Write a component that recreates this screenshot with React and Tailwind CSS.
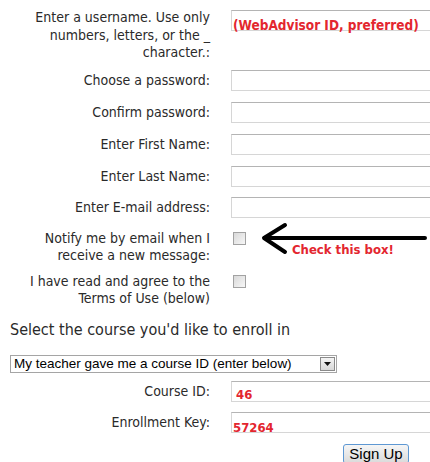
import React from "react";

const labelFont = { fontFamily: '"DejaVu Sans Condensed", "DejaVu Sans", Tahoma, sans-serif' };

function TextBox({ children, className = "" }) {
  return (
    <div
      className={`relative h-[21px] w-[230px] border border-[#d6d6d6] border-t-[#b4b4b4] bg-white ${className}`}
    >
      {children}
    </div>
  );
}

function CheckBox() {
  return (
    <div className="h-[13px] w-[13px] border border-[#a2a2a2] bg-gradient-to-br from-[#d9d9d9] to-[#f7f7f7]" />
  );
}

function Row({ label, children, className = "", align = "items-center" }) {
  return (
    <div className={`flex ${align} ${className}`}>
      <div className="w-[210px] shrink-0 text-right leading-[17.5px]">{label}</div>
      <div className="ml-[21px]">{children}</div>
    </div>
  );
}

export default function App() {
  return (
    <div
      className="relative h-[462px] w-[430px] overflow-hidden bg-white pt-[9px] text-[14px] text-[#2a2a2a]"
      style={labelFont}
    >
      <Row align="items-start" label={<>Enter a username. Use only<br />numbers, letters, or the _<br />character.:</>}>
        <TextBox className="mt-[1px] h-[20px]">
          <span className="absolute left-[1px] top-[6px] whitespace-nowrap text-[13.5px] font-bold leading-[17px] text-[#e3262f]">
            (WebAdvisor ID, preferred)
          </span>
        </TextBox>
      </Row>

      <Row className="mt-[8.5px]" label="Choose a password:">
        <TextBox />
      </Row>
      <Row className="mt-[11px]" label="Confirm password:">
        <TextBox />
      </Row>
      <Row className="mt-[11px]" label="Enter First Name:">
        <TextBox />
      </Row>
      <Row className="mt-[11px]" label="Enter Last Name:">
        <TextBox />
      </Row>
      <Row className="mt-[10px]" label="Enter E-mail address:">
        <TextBox />
      </Row>

      <Row align="items-start" className="mt-[11.5px]" label={<>Notify me by email when I<br />receive a new message:</>}>
        <div className="ml-[2px] mt-[2.5px]">
          <CheckBox />
        </div>
      </Row>
      <Row align="items-start" className="mt-[8px]" label={<>I have read and agree to the<br />Terms of Use (below)</>}>
        <div className="ml-[2px] mt-[2.5px]">
          <CheckBox />
        </div>
      </Row>

      <div className="ml-[10px] mt-[13px] whitespace-nowrap text-[16px] leading-[17.5px]">
        Select the course you'd like to enroll in
      </div>

      <div
        className="ml-[10px] mt-[17px] flex h-[18px] w-[327px] items-center border border-[#a5a5a5] bg-white pl-[3px] text-[13.5px] text-black"
        style={{ fontFamily: '"Liberation Sans", Arial, sans-serif' }}
      >
        <span className="flex-1 whitespace-nowrap leading-[16px]">My teacher gave me a course ID (enter below)</span>
        <div className="mr-[1px] flex h-[14px] w-[15px] items-center justify-center border border-[#8a8a8a] bg-gradient-to-b from-[#f4f4f4] to-[#d8d8d8]">
          <svg width="7" height="4" viewBox="0 0 7 4">
            <path d="M0 0h7L3.5 4z" fill="#111" />
          </svg>
        </div>
      </div>

      <Row className="mt-[8px]" label="Course ID:">
        <TextBox>
          <span className="absolute left-[4px] top-[4px] font-bold text-[13px] leading-[17px] text-[#e3262f]">46</span>
        </TextBox>
      </Row>
      <Row className="mt-[10px]" label="Enrollment Key:">
        <TextBox>
          <span className="absolute left-[1px] top-[6px] font-bold text-[13px] leading-[17px] text-[#e3262f]">57264</span>
        </TextBox>
      </Row>

      <div className="mt-[11px] flex">
        <button
          className="ml-[343px] h-[20px] w-[66px] rounded-[3px] border border-[#5e98d3] bg-gradient-to-b from-[#f6f6f6] to-[#dadada] text-[15px] leading-[16px] text-black"
          style={{ fontFamily: '"Liberation Sans", Arial, sans-serif' }}
        >
          Sign Up
        </button>
      </div>

      {/* arrow pointing at the notify checkbox */}
      <svg className="absolute left-0 top-0" width="430" height="462" viewBox="0 0 430 462">
        <path
          d="M264 238 L425 238 M285 225 L264 238 L285 252"
          fill="none"
          stroke="#000"
          strokeWidth="4"
          strokeLinecap="round"
          strokeLinejoin="round"
        />
      </svg>
      <span className="absolute left-[292px] top-[241px] whitespace-nowrap text-[13px] font-bold leading-[17px] text-[#e3262f]">
        Check this box!
      </span>
    </div>
  );
}
